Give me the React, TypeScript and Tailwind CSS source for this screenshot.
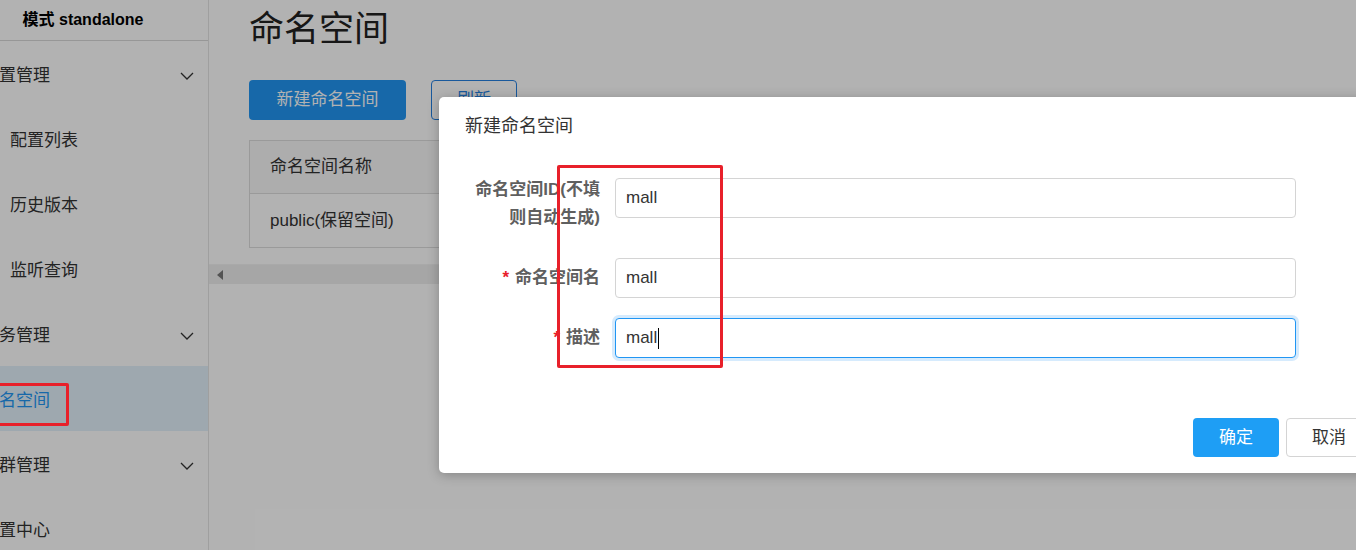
import React from 'react';

const font = { fontFamily: '"Liberation Sans", "Noto Sans CJK SC", sans-serif' };

function Chevron() {
  return (
    <svg width="14" height="8" viewBox="0 0 14 8" fill="none" className="text-[#333]">
      <polyline points="1,1 7,7 13,1" stroke="currentColor" strokeWidth="1.3" />
    </svg>
  );
}

const menu = [
  { label: '配置管理', group: true, arrow: true },
  { label: '配置列表' },
  { label: '历史版本' },
  { label: '监听查询' },
  { label: '服务管理', group: true, arrow: true },
  { label: '命名空间', group: true, active: true },
  { label: '集群管理', group: true, arrow: true },
  { label: '配置中心', group: true },
];

function Sidebar() {
  return (
    <aside className="w-[209px] h-[550px] shrink-0 overflow-hidden border-r border-[#e4e4e4] bg-white">
      <div className="w-[250px] -ml-[42px]">
        <div className="h-[41px] border-b border-[#d9d9d9] flex items-center justify-center text-[16px] font-bold text-black">
          模式 standalone
        </div>
        <div>
          {menu.map((m) => (
            <div
              key={m.label}
              className={`h-[65px] pt-[4px] flex items-center justify-between pr-[14px] text-[17px] ${
                m.group ? 'pl-[24px]' : 'pl-[52px]'
              } ${m.active ? 'bg-[#e3f1fb] text-[#2196f3]' : 'text-[#333]'}`}
            >
              <span>{m.label}</span>
              {m.arrow && <Chevron />}
            </div>
          ))}
        </div>
      </div>
    </aside>
  );
}

function Main() {
  return (
    <main className="flex-1 min-w-0 bg-white">
      <div className="pl-[40px] pt-2">
        <h1 className="text-[35px] leading-[42px] font-normal text-[#222]">命名空间</h1>
        <div className="mt-[30px] flex gap-[25px]">
          <button className="w-[157px] h-[40px] rounded bg-[#2196f3] text-white text-[17px]">新建命名空间</button>
          <button className="w-[86px] h-[40px] rounded border border-[#2580e0] bg-white text-[#2580e0] text-[17px]">刷新</button>
        </div>
        <div className="mt-[20px] mr-[40px] border border-[#dddddd] text-[17px] text-[#333]">
          <div className="h-[53px] flex items-center px-[20px] bg-[#f8f8f8] border-b border-[#dddddd]">命名空间名称</div>
          <div className="h-[53px] flex items-center px-[20px]">public(保留空间)</div>
        </div>
      </div>
      <div className="mt-[16px] h-[20px] bg-[#eeeeee] border-t border-[#f3f3f3] flex items-center pl-[8px]">
        <svg width="6" height="10" viewBox="0 0 6 10">
          <polygon points="6,0 0,5 6,10" fill="#777" />
        </svg>
      </div>
    </main>
  );
}

function Field({ label, required, value, focused, twoLine }: { label: string; required?: boolean; value: string; focused?: boolean; twoLine?: boolean }) {
  return (
    <div className="flex items-start">
      <label
        className={`w-[161px] pl-[31px] text-right text-[17px] leading-[28px] font-bold text-[#5f5f5f] ${twoLine ? '-mt-[2px]' : 'pt-[6px]'}`}
      >
        {required && <span className="text-[#e8202a] mr-[6px]">*</span>}
        {label}
      </label>
      <div
        className={`ml-[15px] w-[681px] h-[40px] rounded flex items-center pl-[10px] text-[17px] text-[#333] bg-white ${
          focused ? 'border border-[#2196f3] ring-[3px] ring-[#d6ebfd]' : 'border border-[#d4d4d4]'
        }`}
      >
        {value}
        {focused && <span className="inline-block w-[1px] h-[21px] bg-black ml-[1px]" />}
      </div>
    </div>
  );
}

function Dialog() {
  return (
    <div className="absolute left-[439px] top-[97px] w-[953px] bg-white rounded-[5px] shadow-[0_2px_12px_rgba(0,0,0,0.25)]">
      <div className="h-[57px] pt-[2px] flex items-center px-[26px] text-[18px] text-[#333]">新建命名空间</div>
      <div className="pt-[24px]">
        <div className="h-[80px]">
          <Field label="命名空间ID(不填则自动生成)" value="mall" twoLine />
        </div>
        <div className="h-[60px]">
          <Field label="命名空间名" required value="mall" />
        </div>
        <div className="h-[40px]">
          <Field label="描述" required value="mall" focused />
        </div>
      </div>
      <div className="mt-[60px] pb-[16px] pr-[20px] flex justify-end gap-[7px]">
        <button className="w-[86px] h-[39px] rounded bg-[#1e9ef5] text-white text-[17px]">确定</button>
        <button className="w-[86px] h-[39px] rounded border border-[#d4d4d4] bg-white text-[#333] text-[17px]">取消</button>
      </div>
    </div>
  );
}

export default function App() {
  return (
    <div className="relative w-[1356px] h-[550px] overflow-hidden flex" style={font}>
      <Sidebar />
      <Main />
      <div className="absolute inset-0 bg-black/30" />
      <div className="absolute left-[-10px] top-[383px] w-[79px] h-[43px] border-[3px] border-[#e8202a] rounded-[2px]" />
      <Dialog />
      <div className="absolute left-[557px] top-[165px] w-[166px] h-[203px] border-[3px] border-[#e8202a] rounded-[2px]" />
    </div>
  );
}
